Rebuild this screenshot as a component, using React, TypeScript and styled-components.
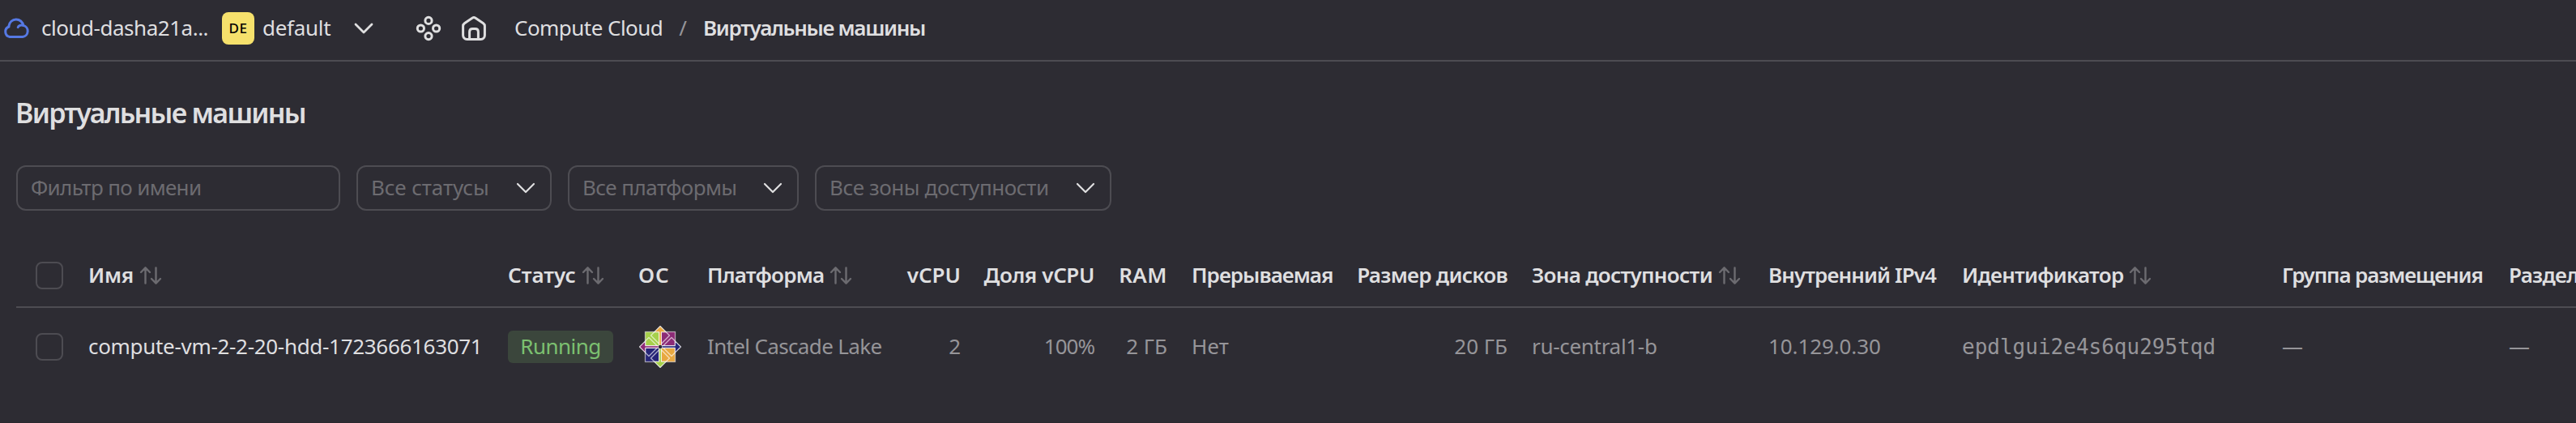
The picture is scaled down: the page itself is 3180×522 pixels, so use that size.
import React from "react";
import styled, { createGlobalStyle } from "styled-components";

const color = {
  bg: "#2d2c33",
  line: "#4d4c52",
  primary: "#dfdfe0",
  secondary: "#969599",
  hint: "#6c6b70",
};

const GlobalStyle = createGlobalStyle`
  * { box-sizing: border-box; }
  body {
    margin: 0;
    background: ${color.bg};
    color: ${color.primary};
    font-family: "Noto Sans", sans-serif;
    font-size: 26px;
    line-height: 36px;
    overflow: hidden;
  }
`;

const Page = styled.div`
  height: 522px;
  overflow: hidden;
  border-bottom: 1px solid #29282e;
`;

const Text = styled.span<{ $track?: number; $tone?: keyof typeof color; $bold?: boolean }>`
  color: ${(p) => color[p.$tone ?? "primary"]};
  font-weight: ${(p) => (p.$bold ? 600 : 400)};
  letter-spacing: ${(p) => p.$track ?? 0}px;
  white-space: nowrap;
  padding-bottom: 2px;
`;

const TopBar = styled.header`
  display: flex;
  align-items: center;
  height: 76px;
  padding: 0 0 4px 3px;
  border-bottom: 2px solid ${color.line};
`;

const CloudLink = styled.div`
  display: flex;
  align-items: center;
  gap: 14px;
  width: 271px;
`;

const FolderLink = styled.div`
  display: flex;
  align-items: center;
  gap: 10px;
  width: 163px;
`;

const Badge = styled.span`
  display: grid;
  place-items: center;
  width: 40px;
  height: 40px;
  border-radius: 8px;
  background: #f6e16c;
  color: #000;
  font-size: 17px;
  font-weight: 500;
  letter-spacing: 0.6px;
`;

const ServiceIcons = styled.div`
  display: flex;
  gap: 24px;
  margin: 0 34px 0 52px;
`;

const Breadcrumbs = styled.nav`
  display: flex;
  align-items: center;
  gap: 20px;
`;

const Title = styled.h1`
  margin: 41px 0 43px 19px;
  font-size: 34px;
  line-height: 44px;
  font-weight: 600;
  letter-spacing: -1.73px;
`;

const Filters = styled.div`
  display: flex;
  gap: 20px;
  padding-left: 20px;
`;

const Field = styled.div<{ $width: number }>`
  display: flex;
  align-items: center;
  justify-content: space-between;
  width: ${(p) => p.$width}px;
  height: 56px;
  padding: 0 18px 0 16px;
  border: 2px solid ${color.line};
  border-radius: 12px;
`;

const Table = styled.div`
  margin: 40px 0 0 20px;
`;

const Row = styled.div<{ $head?: boolean }>`
  display: grid;
  grid-template-columns: 89px 518px 161px 85px 247px 96px 165px 90px 205px 215px 292px 239px 395px 280px 200px;
  align-items: center;
  height: ${(p) => (p.$head ? 80 : 96)}px;
  padding-top: ${(p) => (p.$head ? 2 : 0)}px;
  border-bottom: ${(p) => (p.$head ? `2px solid ${color.line}` : "none")};
`;

const Cell = styled.div<{ $right?: boolean }>`
  display: flex;
  align-items: center;
  justify-content: ${(p) => (p.$right ? "flex-end" : "flex-start")};
  gap: 7px;
  padding-right: 30px;
`;

const CheckCell = styled.div`
  padding-left: 24px;
`;

const Checkbox = styled.div`
  width: 34px;
  height: 34px;
  border: 2px solid ${color.line};
  border-radius: 8px;
`;

const Status = styled.span`
  display: flex;
  align-items: center;
  justify-content: center;
  flex-shrink: 0;
  width: 130px;
  height: 40px;
  padding-bottom: 2px;
  border-radius: 6px;
  background: #3b463c;
  color: #7cc070;
  letter-spacing: -0.55px;
`;

const Mono = styled.span`
  font-family: "DejaVu Sans Mono", monospace;
  color: ${color.secondary};
`;

const Chevron = ({ thick }: { thick?: boolean }) => (
  <svg width="24" height="14" viewBox="0 0 24 14" fill="none" stroke={color.primary}
    strokeWidth={thick ? 2.8 : 2.2} strokeLinecap="round" strokeLinejoin="round">
    <path d="M2 2L12 12L22 2" />
  </svg>
);

const SortIcon = () => (
  <svg width="28" height="24" viewBox="0 0 28 24" fill="none" stroke={color.hint}
    strokeWidth="2.4" strokeLinecap="round" strokeLinejoin="round">
    <path d="M7.5 21.5V2.5M2 8L7.5 2.3L13 8M20.5 2.5V21.5M15 16L20.5 21.7L26 16" />
  </svg>
);

const CloudIcon = () => (
  <svg width="34" height="26" viewBox="0 0 34 26" fill="none" stroke="#5679e4"
    strokeWidth="3" strokeLinecap="round" strokeLinejoin="round">
    <path d="M9 23.5H25A7.2 7.2 0 0 0 25.8 9.4A9 9 0 0 0 8 9.8V11A6.5 6.5 0 0 0 9 23.5Z" />
    <path d="M25.8 9.2C22.6 8.6 19.8 9.7 19.2 11.6" />
  </svg>
);

const ServicesIcon = () => (
  <svg width="32" height="32" viewBox="0 0 32 32" fill="none" stroke={color.primary} strokeWidth="3">
    <circle cx="16" cy="6.4" r="4.1" />
    <circle cx="6.4" cy="16" r="4.1" />
    <circle cx="25.6" cy="16" r="4.1" />
    <circle cx="16" cy="25.6" r="4.1" />
  </svg>
);

const HomeIcon = () => (
  <svg width="32" height="32" viewBox="0 0 32 32" fill="none" stroke={color.primary}
    strokeWidth="3" strokeLinejoin="round">
    <path d="M2.6 13.2C2.6 11.8 3.2 10.7 4.4 9.8L14 3.2C15.3 2.3 16.7 2.3 18 3.2L27.6 9.8C28.8 10.7 29.4 11.8 29.4 13.2V24.5C29.4 27.3 27.4 29.4 24.6 29.4H7.4C4.6 29.4 2.6 27.3 2.6 24.5Z" />
    <path d="M10.6 29V20.2C10.6 17.8 12 16.4 14.4 16.4H17.6C20 16.4 21.4 17.8 21.4 20.2V29" />
  </svg>
);

const CentosIcon = () => (
  <svg width="54" height="54" viewBox="-27 -27 54 54">
    <g stroke="#f2ecf0" strokeOpacity="0.6" strokeWidth="1.3">
      <rect x="-18.5" y="-18.5" width="17.5" height="17.5" fill="#a6d04a" />
      <rect x="1" y="-18.5" width="17.5" height="17.5" fill="#8c2a76" />
      <rect x="-18.5" y="1" width="17.5" height="17.5" fill="#262577" />
      <rect x="1" y="1" width="17.5" height="17.5" fill="#e8a840" />
    </g>
    <g stroke="#fff" strokeOpacity="0.8" strokeWidth="1.1" strokeLinejoin="round">
      <path fill="#e8a840" d="M0-25.5L7.2-18.3H1.4V-2H-1.4V-18.3H-7.2Z" />
      <path fill="#262577" d="M25.5 0L18.3 7.2V1.4H2V-1.4H18.3V-7.2Z" />
      <path fill="#a6d04a" d="M0 25.5L7.2 18.3H1.4V2H-1.4V18.3H-7.2Z" />
      <path fill="#8c2a76" d="M-25.5 0L-18.3 7.2V1.4H-2V-1.4H-18.3V-7.2Z" />
    </g>
    <g fill="none" stroke="#fff" strokeOpacity="0.6" strokeWidth="1.4" strokeLinejoin="round">
      <path d="M-7.2-18.3L-11.5-14L-1.6-4M7.2-18.3L11.5-14L1.6-4" />
      <path d="M-7.2 18.3L-11.5 14L-1.6 4M7.2 18.3L11.5 14L1.6 4" />
      <path d="M-18.3-7.2L-14-11.5L-4-1.6M-18.3 7.2L-14 11.5L-4 1.6" />
      <path d="M18.3-7.2L14-11.5L4-1.6M18.3 7.2L14 11.5L4 1.6" />
    </g>
    <circle r="2.2" fill={color.bg} />
  </svg>
);

type Column = { label: string; track: number; right?: boolean; sortable?: boolean };

const columns: Column[] = [
  { label: "Имя", track: -0.3, sortable: true },
  { label: "Статус", track: 0, sortable: true },
  { label: "ОС", track: 1 },
  { label: "Платформа", track: -0.78, sortable: true },
  { label: "vCPU", track: 0, right: true },
  { label: "Доля vCPU", track: -0.38, right: true },
  { label: "RAM", track: 0.5, right: true },
  { label: "Прерываемая", track: -0.95 },
  { label: "Размер дисков", track: -0.7, right: true },
  { label: "Зона доступности", track: -0.7, sortable: true },
  { label: "Внутренний IPv4", track: -0.9 },
  { label: "Идентификатор", track: -0.75, sortable: true },
  { label: "Группа размещения", track: -1.1 },
  { label: "Раздел", track: -0.7 },
];

const selects = [
  { label: "Все статусы", track: -0.1, width: 241 },
  { label: "Все платформы", track: -0.55, width: 285 },
  { label: "Все зоны доступности", track: -0.4, width: 366 },
];

export default function App() {
  return (
    <Page>
      <GlobalStyle />
      <TopBar>
        <CloudLink>
          <CloudIcon />
          <Text $track={-0.48}>cloud-dasha21a...</Text>
        </CloudLink>
        <FolderLink>
          <Badge>DE</Badge>
          <Text $track={-0.3}>default</Text>
        </FolderLink>
        <Chevron thick />
        <ServiceIcons>
          <ServicesIcon />
          <HomeIcon />
        </ServiceIcons>
        <Breadcrumbs>
          <Text $track={-0.54}>Compute Cloud</Text>
          <Text $tone="secondary">/</Text>
          <Text $bold $track={-1.3}>Виртуальные машины</Text>
        </Breadcrumbs>
      </TopBar>
      <Title>Виртуальные машины</Title>
      <Filters>
        <Field $width={400}>
          <Text $tone="hint" $track={-0.67}>Фильтр по имени</Text>
        </Field>
        {selects.map((s) => (
          <Field key={s.label} $width={s.width}>
            <Text $tone="hint" $track={s.track}>{s.label}</Text>
            <Chevron />
          </Field>
        ))}
      </Filters>
      <Table>
        <Row $head>
          <CheckCell><Checkbox /></CheckCell>
          {columns.map((c) => (
            <Cell key={c.label} $right={c.right}>
              <Text $bold $track={c.track}>{c.label}</Text>
              {c.sortable && <SortIcon />}
            </Cell>
          ))}
        </Row>
        <Row>
          <CheckCell><Checkbox /></CheckCell>
          <Cell><Text $track={-0.31}>compute-vm-2-2-20-hdd-1723666163071</Text></Cell>
          <Cell><Status>Running</Status></Cell>
          <Cell><CentosIcon /></Cell>
          <Cell><Text $tone="secondary" $track={-0.65}>Intel Cascade Lake</Text></Cell>
          <Cell $right><Text $tone="secondary">2</Text></Cell>
          <Cell $right><Text $tone="secondary" $track={-1}>100%</Text></Cell>
          <Cell $right><Text $tone="secondary">2 ГБ</Text></Cell>
          <Cell><Text $tone="secondary" $track={0.2}>Нет</Text></Cell>
          <Cell $right><Text $tone="secondary">20 ГБ</Text></Cell>
          <Cell><Text $tone="secondary" $track={-0.3}>ru-central1-b</Text></Cell>
          <Cell><Text $tone="secondary" $track={-0.1}>10.129.0.30</Text></Cell>
          <Cell><Mono>epdlgui2e4s6qu295tqd</Mono></Cell>
          <Cell><Text $tone="secondary">—</Text></Cell>
          <Cell><Text $tone="secondary">—</Text></Cell>
        </Row>
      </Table>
    </Page>
  );
}
